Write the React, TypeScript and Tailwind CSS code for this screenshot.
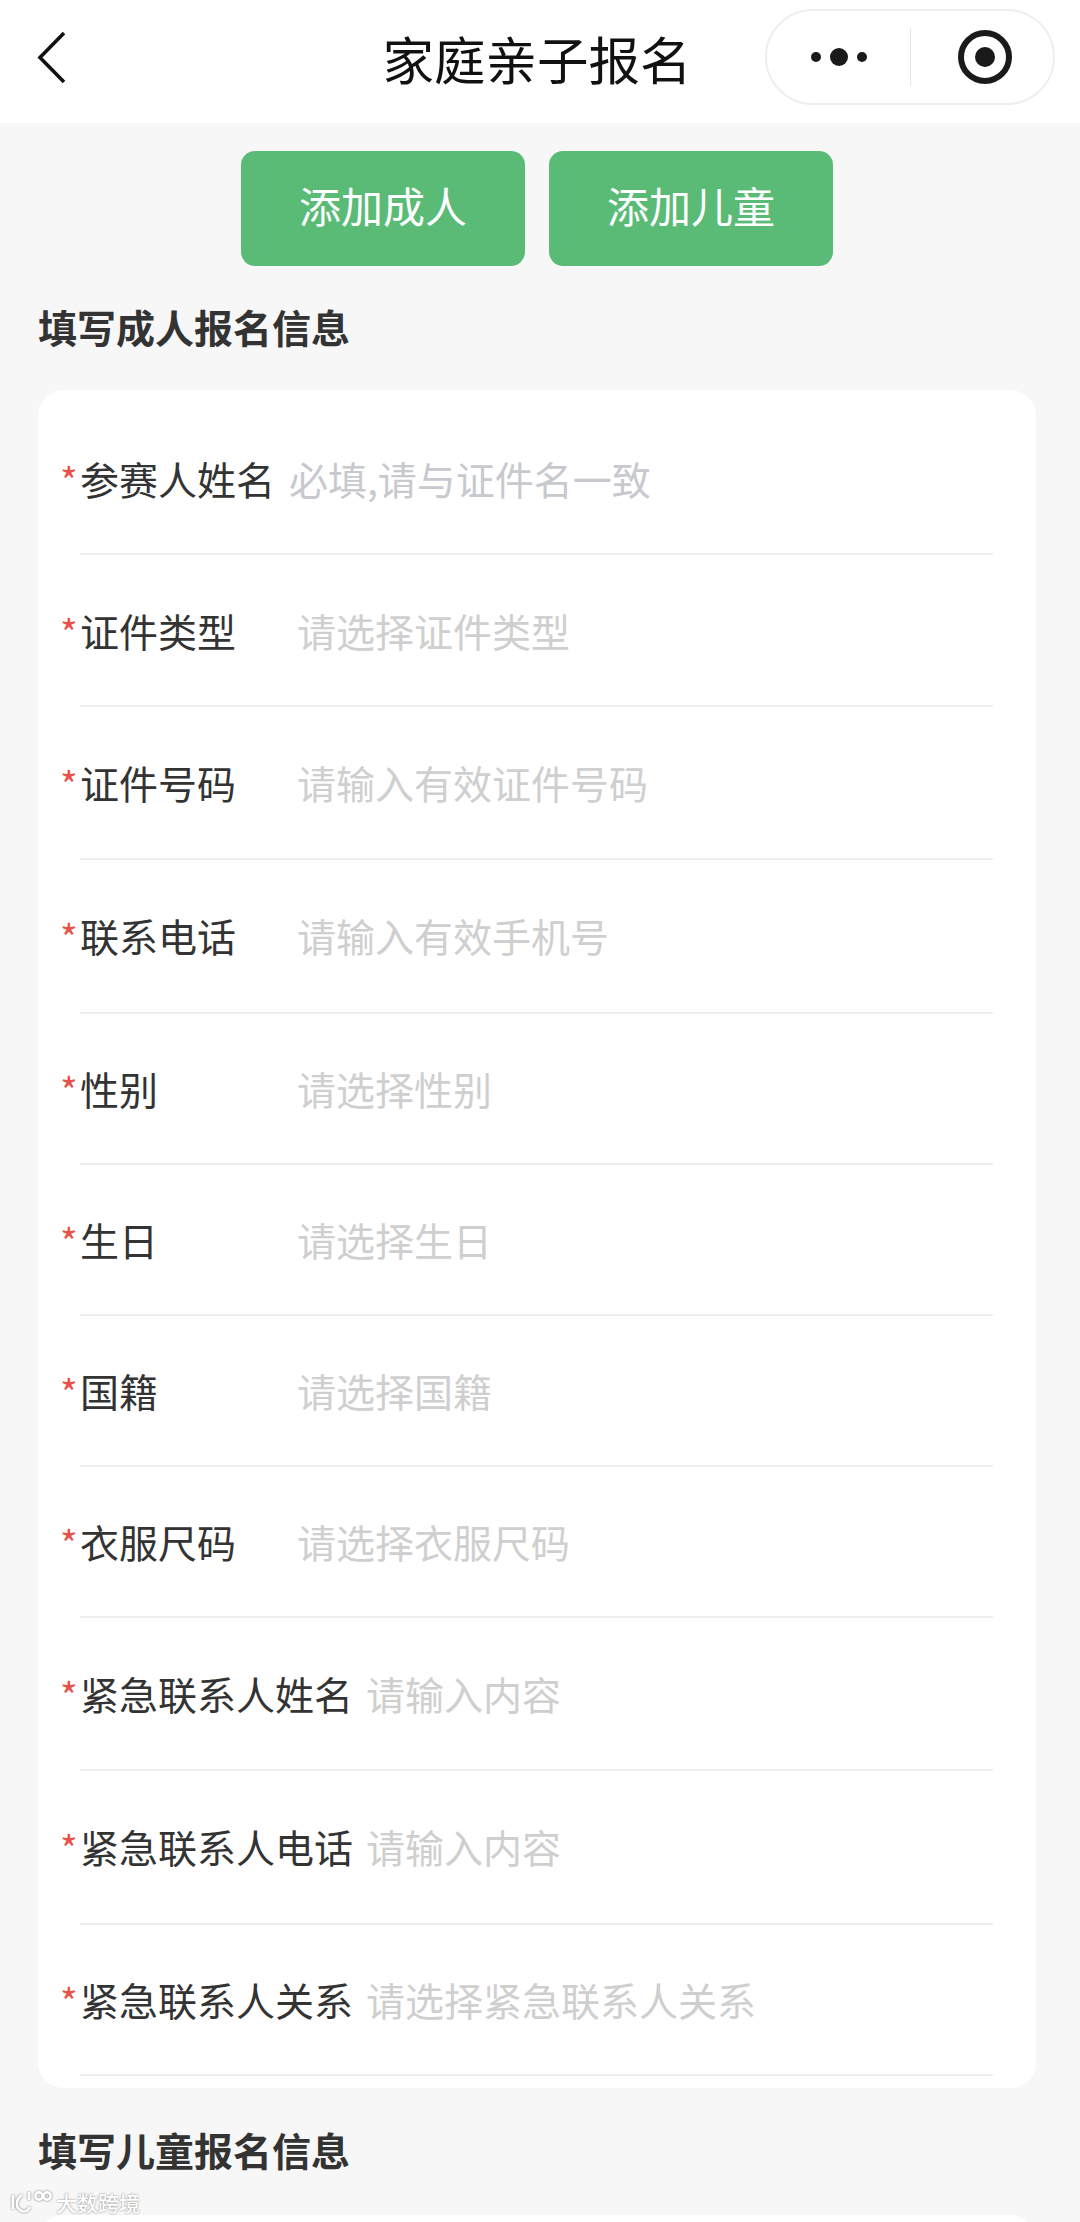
const adultFields = [
  { label: "参赛人姓名", hint: "必填,请与证件名一致", hintClass: "text-[#c8c9cf]", labelClass: "min-w-[209px]", rowClass: "h-[165px] pt-[60px]" },
  { label: "证件类型", hint: "请选择证件类型", hintClass: "text-[#cfcfcf]", labelClass: "min-w-[217px]", rowClass: "h-[152px] pt-[47px]" },
  { label: "证件号码", hint: "请输入有效证件号码", hintClass: "text-[#cfcfcf]", labelClass: "min-w-[217px]", rowClass: "h-[153px] pt-[47px]" },
  { label: "联系电话", hint: "请输入有效手机号", hintClass: "text-[#cfcfcf]", labelClass: "min-w-[217px]", rowClass: "h-[154px] pt-[47px]" },
  { label: "性别", hint: "请选择性别", hintClass: "text-[#cfcfcf]", labelClass: "min-w-[217px]", rowClass: "h-[151px] pt-[46px]" },
  { label: "生日", hint: "请选择生日", hintClass: "text-[#cfcfcf]", labelClass: "min-w-[217px]", rowClass: "h-[151px] pt-[46px]" },
  { label: "国籍", hint: "请选择国籍", hintClass: "text-[#cfcfcf]", labelClass: "min-w-[217px]", rowClass: "h-[151px] pt-[46px]" },
  { label: "衣服尺码", hint: "请选择衣服尺码", hintClass: "text-[#cfcfcf]", labelClass: "min-w-[217px]", rowClass: "h-[151px] pt-[46px]" },
  { label: "紧急联系人姓名", hint: "请输入内容", hintClass: "text-[#cfcfcf]", labelClass: "min-w-[217px]", rowClass: "h-[153px] pt-[47px]" },
  { label: "紧急联系人电话", hint: "请输入内容", hintClass: "text-[#cfcfcf]", labelClass: "min-w-[217px]", rowClass: "h-[154px] pt-[47px]" },
  { label: "紧急联系人关系", hint: "请选择紧急联系人关系", hintClass: "text-[#cfcfcf]", labelClass: "min-w-[217px]", rowClass: "h-[151px] pt-[46px]" },
];

function FieldRow({ label, hint, hintClass, labelClass, rowClass }: (typeof adultFields)[number]) {
  return (
    <div className={`flex ${rowClass}`}>
      <div className="ml-[42px] flex w-[913px] border-b-2 border-[#eceef0]">
        <span className={`relative pr-[13px] text-[39px] leading-[56px] text-[#333333] ${labelClass}`}>
          <span className="absolute left-[-20px] top-[10px] text-[38px] leading-[40px] text-[#e5534b]">*</span>
          {label}
        </span>
        <span className={`text-[39px] leading-[56px] ${hintClass}`}>{hint}</span>
      </div>
    </div>
  );
}

export default function App() {
  return (
    <div className="relative h-[2222px] w-[1080px] overflow-hidden bg-[#f7f7f7] font-['Noto_Sans_CJK_SC',sans-serif]">
      {/* Nav bar */}
      <header className="relative flex h-[123px] items-center justify-center bg-white">
        <svg className="absolute left-[34px] top-[30px]" width="36" height="56" viewBox="0 0 36 56" fill="none" stroke="#111111" strokeWidth="3.6">
          <path d="M30 3 6 27.5 30 52" />
        </svg>
        <h1 className="mb-[8px] pr-[6px] text-[51.5px] font-normal leading-[60px] text-[#111111]">家庭亲子报名</h1>
        <div className="absolute left-[765px] top-[9px] flex h-[96px] w-[290px] items-center rounded-full border-2 border-[#eeeeee] bg-white">
          <div className="flex w-[143px] items-center justify-center gap-[9px]">
            <span className="h-[10px] w-[10px] rounded-full bg-[#1a1a1a]" />
            <span className="h-[18px] w-[18px] rounded-full bg-[#1a1a1a]" />
            <span className="h-[10px] w-[10px] rounded-full bg-[#1a1a1a]" />
          </div>
          <span className="h-[58px] w-[1px] bg-[#e5e5e5]" />
          <div className="ml-[6px] flex flex-1 items-center justify-center">
            <span className="flex h-[54px] w-[54px] items-center justify-center rounded-full border-[6px] border-[#1a1a1a]">
              <span className="h-[20px] w-[20px] rounded-full bg-[#1a1a1a]" />
            </span>
          </div>
        </div>
      </header>

      {/* Add buttons */}
      <div className="mt-[28px] flex justify-center gap-[24px] pr-[6px]">
        <button className="h-[115px] w-[284px] rounded-[14px] bg-[#5abb77] pb-[8px] text-[42px] text-white">添加成人</button>
        <button className="h-[115px] w-[284px] rounded-[14px] bg-[#5abb77] pb-[8px] text-[42px] text-white">添加儿童</button>
      </div>

      <h2 className="ml-[38px] mt-[32px] text-[39px] font-bold leading-[56px] text-[#333333]">填写成人报名信息</h2>

      <section className="ml-[38px] mt-[36px] h-[1698px] w-[998px] overflow-hidden rounded-[26px] bg-white">
        {adultFields.map((field) => (
          <FieldRow key={field.label} {...field} />
        ))}
      </section>

      <h2 className="ml-[38px] mt-[33px] text-[39px] font-bold leading-[56px] text-[#333333]">填写儿童报名信息</h2>

      <section className="ml-[38px] mt-[38px] h-[100px] w-[998px] rounded-[26px] bg-white" />

      {/* Watermark */}
      <div className="absolute bottom-[6px] left-[8px] flex h-[28px] items-center gap-[2px]">
        <svg width="46" height="28" viewBox="0 0 46 28" fill="none" stroke="#ffffff" strokeWidth="2.6" style={{ filter: "drop-shadow(0 0 1px #777777)" }}>
          <path d="M5 7v14" />
          <path d="M14 7C8 11 7 18 12 22c4 3 8 1 10-3" />
          <path d="M21 4v8" />
          <circle cx="31" cy="8" r="3.6" />
          <circle cx="39" cy="8" r="3.6" />
        </svg>
        <span className="text-[21px] font-medium leading-[28px] text-white [text-shadow:0_0_2px_#777777]">大数跨境</span>
      </div>
    </div>
  );
}
